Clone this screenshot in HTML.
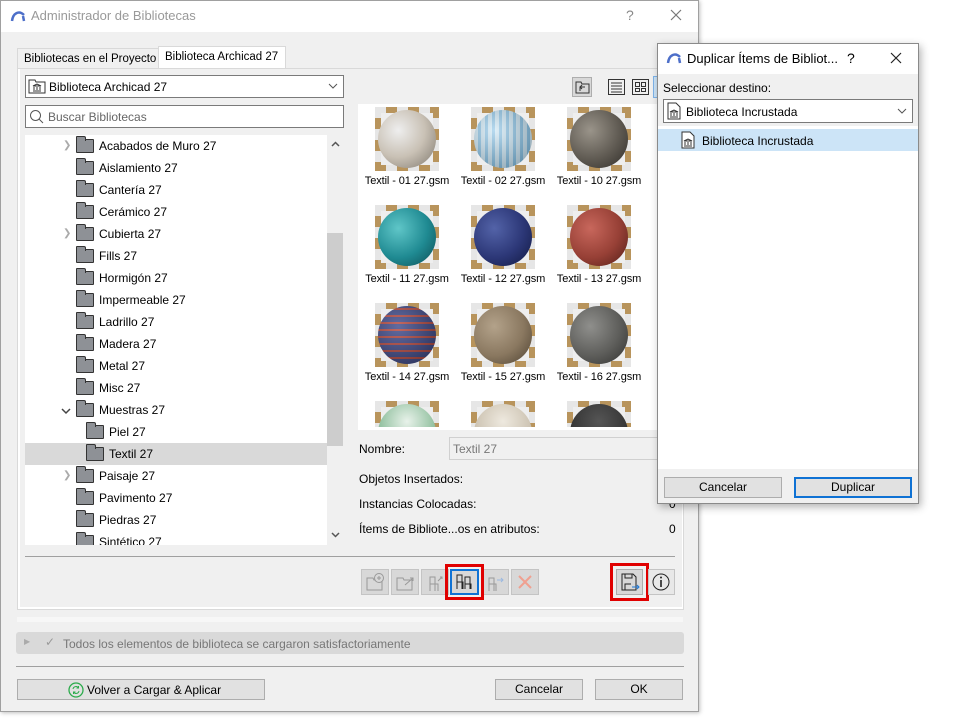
<!DOCTYPE html>
<html><head><meta charset="utf-8"><style>
*{box-sizing:border-box;margin:0;padding:0}
body{width:955px;height:723px;background:#fff;font-family:"Liberation Sans",sans-serif;font-size:12px;color:#000;position:relative;overflow:hidden}
.a{position:absolute;white-space:nowrap}
.btn{position:absolute;background:#e1e1e1;border:1px solid #adadad;text-align:center;line-height:19px;font-size:12px;white-space:nowrap}
.fold{position:absolute;width:18px;height:14px;top:4px;background:#8e9196;border:1px solid #333;border-radius:1px}
.fold:before{content:"";position:absolute;left:-1px;top:-4px;width:8px;height:4px;background:#8e9196;border:1px solid #333;border-bottom:none;border-radius:1px 2px 0 0}
.chev{position:absolute;color:#aaa;font-size:10px}
.th{position:absolute;width:64px;height:64px;background:
 conic-gradient(#b8945c 25%,#e6e6e6 0 50%,#b8945c 0 75%,#e6e6e6 0) 0 0/22px 22px;overflow:hidden}
.th:before{content:"";position:absolute;left:6px;top:6px;right:6px;bottom:6px;background:#eee}
.th i{position:absolute;left:3px;top:3px;width:58px;height:58px;border-radius:50%}
.lb{position:absolute;width:96px;text-align:center;font-size:11px;letter-spacing:-0.1px;white-space:nowrap}
.tb{position:absolute;top:569px;width:28px;height:26px;background:#d8d8d8;border:1px solid #c4c4c4}
</style></head><body>
<div class="a" style="left:0;top:0;width:699px;height:712px;background:#f0f0f0;border:1px solid #a0a0a0;box-shadow:1px 1px 4px rgba(0,0,0,.25)"></div>
<div class="a" style="left:1px;top:1px;width:697px;height:31px;background:#fff"></div>
<svg class="a" style="left:10px;top:9px" width="16" height="14"><path d="M2 12 C3 4 9 1 14 6" stroke="#4d6fc9" stroke-width="2.5" fill="none"/><path d="M13 7 L14 12" stroke="#4d6fc9" stroke-width="2.5"/></svg>
<div class="a" style="left:31px;top:8px;font-size:13px;color:#999">Administrador de Bibliotecas</div>
<div class="a" style="left:626px;top:7px;font-size:14px;color:#888">?</div>
<svg class="a" style="left:670px;top:9px" width="12" height="12"><path d="M1 1l10 10M11 1L1 11" stroke="#777" stroke-width="1.2"/></svg>
<div class="a" style="left:17px;top:48px;width:142px;height:21px;border:1px solid #d9d9d9;border-bottom:none;background:#f0f0f0;padding:4px 0 0 6px;font-size:11.5px">Bibliotecas en el Proyecto</div>
<div class="a" style="left:158px;top:46px;width:128px;height:23px;border:1px solid #d9d9d9;border-bottom:none;background:#fff;padding:4px 0 0 6px;font-size:11.5px">Biblioteca Archicad 27</div>
<div class="a" style="left:17px;top:68px;width:667px;height:542px;border:1px solid #d9d9d9;background:#fff"></div>
<div class="a" style="left:20px;top:69px;width:662px;height:538px;background:#f0f0f0"></div>
<div class="a" style="left:25px;top:75px;width:319px;height:23px;border:1px solid #7a7a7a;background:#fff"></div>
<svg class="a" style="left:28px;top:79px" width="18" height="15"><path d="M1 1h6l1 2h9v11H1z" fill="#fff" stroke="#333"/><path d="M5 7l4-2 4 2zM5 12h8M6 8v3M9 8v3M12 8v3" stroke="#333" fill="none"/></svg>
<div class="a" style="left:49px;top:80px">Biblioteca Archicad 27</div>
<svg class="a" style="left:328px;top:83px" width="10" height="6"><path d="M1 1l4 4 4-4" stroke="#555" fill="none"/></svg>
<div class="a" style="left:25px;top:105px;width:319px;height:23px;border:1px solid #7a7a7a;background:#fff"></div>
<svg class="a" style="left:29px;top:109px" width="16" height="16"><circle cx="6.5" cy="6.5" r="5" stroke="#555" fill="none"/><path d="M10 10l4 4" stroke="#555"/></svg>
<div class="a" style="left:48px;top:110px;color:#666">Buscar Bibliotecas</div>
<div class="a" style="left:25px;top:135px;width:318px;height:410px;background:#fff"></div>
<div class="a" style="left:25px;top:443px;width:302px;height:22px;background:#d9d9d9"></div>
<div class="a" style="left:327px;top:135px;width:16px;height:410px;background:#f0f0f0"></div>
<div class="a" style="left:327px;top:233px;width:16px;height:213px;background:#cdcdcd"></div>
<svg class="a" style="left:331px;top:141px" width="9" height="6"><path d="M1 5l3.5-3.5L8 5" stroke="#555" stroke-width="1.5" fill="none"/></svg>
<svg class="a" style="left:331px;top:532px" width="9" height="6"><path d="M1 1l3.5 3.5L8 1" stroke="#555" stroke-width="1.5" fill="none"/></svg>
<div class="a" style="left:25px;top:135px;width:302px;height:410px;overflow:hidden">
<div style="position:relative">
<span class="chev" style="left:38px;top:5px">❯</span><div class="fold" style="left:51px"></div><div class="a" style="left:74px;top:4px">Acabados de Muro 27</div>
<div class="fold" style="left:51px;top:26px"></div><div class="a" style="left:74px;top:26px">Aislamiento 27</div>
<div class="fold" style="left:51px;top:48px"></div><div class="a" style="left:74px;top:48px">Cantería 27</div>
<div class="fold" style="left:51px;top:70px"></div><div class="a" style="left:74px;top:70px">Cerámico 27</div>
<span class="chev" style="left:38px;top:93px">❯</span><div class="fold" style="left:51px;top:92px"></div><div class="a" style="left:74px;top:92px">Cubierta 27</div>
<div class="fold" style="left:51px;top:114px"></div><div class="a" style="left:74px;top:114px">Fills 27</div>
<div class="fold" style="left:51px;top:136px"></div><div class="a" style="left:74px;top:136px">Hormigón 27</div>
<div class="fold" style="left:51px;top:158px"></div><div class="a" style="left:74px;top:158px">Impermeable 27</div>
<div class="fold" style="left:51px;top:180px"></div><div class="a" style="left:74px;top:180px">Ladrillo 27</div>
<div class="fold" style="left:51px;top:202px"></div><div class="a" style="left:74px;top:202px">Madera 27</div>
<div class="fold" style="left:51px;top:224px"></div><div class="a" style="left:74px;top:224px">Metal 27</div>
<div class="fold" style="left:51px;top:246px"></div><div class="a" style="left:74px;top:246px">Misc 27</div>
<svg class="a" style="left:36px;top:273px" width="10" height="7"><path d="M1 1l4 4 4-4" stroke="#444" stroke-width="1.5" fill="none"/></svg><div class="fold" style="left:51px;top:268px"></div><div class="a" style="left:74px;top:268px">Muestras 27</div>
<div class="fold" style="left:61px;top:290px"></div><div class="a" style="left:84px;top:290px">Piel 27</div>
<div class="fold" style="left:61px;top:312px"></div><div class="a" style="left:84px;top:312px">Textil 27</div>
<span class="chev" style="left:38px;top:335px">❯</span><div class="fold" style="left:51px;top:334px"></div><div class="a" style="left:74px;top:334px">Paisaje 27</div>
<div class="fold" style="left:51px;top:356px"></div><div class="a" style="left:74px;top:356px">Pavimento 27</div>
<div class="fold" style="left:51px;top:378px"></div><div class="a" style="left:74px;top:378px">Piedras 27</div>
<div class="fold" style="left:51px;top:400px"></div><div class="a" style="left:74px;top:400px">Sintético 27</div>
</div></div>
<div class="a" style="left:572px;top:77px;width:20px;height:20px;background:#d8d8d8;border:1px solid #adadad"></div>
<svg class="a" style="left:575px;top:80px" width="15" height="14"><path d="M1 2h5l1 2h7v9H1z" fill="none" stroke="#333"/><path d="M5 11V7h5M5 7l2-2M5 7l2 2" stroke="#333" fill="none"/></svg>
<svg class="a" style="left:608px;top:79px" width="17" height="16"><rect x=".5" y=".5" width="16" height="15" fill="none" stroke="#333"/><path d="M3 4h11M3 7h11M3 10h11M3 13h11" stroke="#333"/></svg>
<svg class="a" style="left:632px;top:79px" width="17" height="16"><rect x=".5" y=".5" width="16" height="15" fill="none" stroke="#333"/><rect x="3.5" y="3.5" width="4" height="4" fill="none" stroke="#333"/><rect x="9.5" y="3.5" width="4" height="4" fill="none" stroke="#333"/><rect x="3.5" y="9.5" width="4" height="3" fill="none" stroke="#333"/><rect x="9.5" y="9.5" width="4" height="3" fill="none" stroke="#333"/></svg>
<div class="a" style="left:653px;top:76px;width:6px;height:22px;background:#cde4f7;border:1px solid #7eb4ea"></div>
<div class="a" style="left:358px;top:104px;width:300px;height:326px;background:#fff"></div>
<div class="th" style="left:375px;top:107px"><i style="background:radial-gradient(circle at 35% 35%,#eee,#c9c1b5 50%,#7d766c)"></i></div>
<div class="th" style="left:471px;top:107px"><i style="background:radial-gradient(circle at 35% 35%,rgba(255,255,255,.5),rgba(0,0,0,.3)),repeating-linear-gradient(90deg,#bfe0f2 0 4px,#6fb5e0 4px 7px)"></i></div>
<div class="th" style="left:567px;top:107px"><i style="background:radial-gradient(circle at 35% 35%,#9a948a,#5f5a52 55%,#2e2b27)"></i></div>
<div class="lb" style="left:359px;top:175px">Textil - 01 27.gsm</div>
<div class="lb" style="left:455px;top:175px">Textil - 02 27.gsm</div>
<div class="lb" style="left:551px;top:175px">Textil - 10 27.gsm</div>
<div class="th" style="left:375px;top:205px"><i style="background:radial-gradient(circle at 35% 35%,#5fc6c8,#1f8a92 55%,#0c4b52)"></i></div>
<div class="th" style="left:471px;top:205px"><i style="background:radial-gradient(circle at 35% 35%,#5363a8,#2c3777 55%,#111840)"></i></div>
<div class="th" style="left:567px;top:205px"><i style="background:radial-gradient(circle at 35% 35%,#c8675c,#974036 55%,#521d17)"></i></div>
<div class="lb" style="left:359px;top:273px">Textil - 11 27.gsm</div>
<div class="lb" style="left:455px;top:273px">Textil - 12 27.gsm</div>
<div class="lb" style="left:551px;top:273px">Textil - 13 27.gsm</div>
<div class="th" style="left:375px;top:303px"><i style="background:radial-gradient(circle at 35% 35%,rgba(255,255,255,.2),rgba(0,0,0,.4)),repeating-linear-gradient(0deg,#3b4688 0 5px,#b6443b 5px 7px),#3b4688"></i></div>
<div class="th" style="left:471px;top:303px"><i style="background:radial-gradient(circle at 35% 35%,#b3a28a,#8a7860 55%,#4c4030)"></i></div>
<div class="th" style="left:567px;top:303px"><i style="background:radial-gradient(circle at 35% 35%,#8f8f8c,#5e5e5b 55%,#30302e)"></i></div>
<div class="lb" style="left:359px;top:371px">Textil - 14 27.gsm</div>
<div class="lb" style="left:455px;top:371px">Textil - 15 27.gsm</div>
<div class="lb" style="left:551px;top:371px">Textil - 16 27.gsm</div>
<div class="th" style="left:375px;top:401px;height:26px"><i style="background:radial-gradient(circle at 50% 30%,#e8f2ea,#4f9a66)"></i></div>
<div class="th" style="left:471px;top:401px;height:26px"><i style="background:radial-gradient(circle at 50% 30%,#eee9df,#b3a690)"></i></div>
<div class="th" style="left:567px;top:401px;height:26px"><i style="background:radial-gradient(circle at 50% 30%,#555,#1e1e1e)"></i></div>
<div class="a" style="left:359px;top:442px">Nombre:</div>
<div class="a" style="left:449px;top:437px;width:215px;height:23px;border:1px solid #d0d0d0;background:#f0f0f0;color:#777;padding:4px 3px">Textil 27</div>
<div class="a" style="left:359px;top:472px">Objetos Insertados:</div>
<div class="a" style="left:359px;top:497px">Instancias Colocadas:</div>
<div class="a" style="left:359px;top:522px">Ítems de Bibliote...os en atributos:</div>
<div class="a" style="left:669px;top:522px">0</div>
<div class="a" style="left:669px;top:497px">0</div>
<div class="a" style="left:25px;top:556px;width:650px;height:1px;background:#a0a0a0"></div>
<div class="tb" style="left:361px"></div><div class="tb" style="left:391px"></div><div class="tb" style="left:421px"></div>
<div class="tb" style="left:481px"></div><div class="tb" style="left:511px"></div>
<svg class="a" style="left:366px;top:572px" width="20" height="20"><path d="M1 6h6l1 2h8v10H1z" fill="none" stroke="#999"/><circle cx="13" cy="6" r="4.5" fill="#d8d8d8" stroke="#999"/><path d="M13 4v4M11 6h4" stroke="#999"/></svg>
<svg class="a" style="left:396px;top:573px" width="20" height="20"><path d="M1 5h6l1 2h8v10H1z" fill="none" stroke="#999"/><path d="M9 12l8-7M14 5h3v3" stroke="#999" fill="none"/></svg>
<svg class="a" style="left:426px;top:573px" width="20" height="20"><path d="M4 18V4h5v14M4 11h8v7" stroke="#999" fill="none"/><path d="M12 8l4-4M14 4h2v2" stroke="#999" fill="none"/></svg>
<div class="a" style="left:445px;top:564px;width:39px;height:36px;border:3px solid #e00000"></div>
<div class="a" style="left:450px;top:569px;width:29px;height:26px;border:2px solid #0f72d4;background:#d8d8d8"></div>
<svg class="a" style="left:455px;top:572px" width="20" height="20"><path d="M2 17V3h5v14M2 10h6v7M10 17V5h5v12M10 12h6v5" stroke="#222" fill="none"/></svg>
<svg class="a" style="left:486px;top:573px" width="20" height="20"><path d="M3 18V5h5v13M3 11h7v7" stroke="#999" fill="none"/><path d="M11 7h6M15 5l2 2-2 2" stroke="#9ab8e0" fill="none"/></svg>
<svg class="a" style="left:516px;top:573px" width="18" height="18"><path d="M3 3l12 12M15 3L3 15" stroke="#f0a090" stroke-width="2"/></svg>
<div class="a" style="left:610px;top:563px;width:39px;height:38px;border:3px solid #e00000"></div>
<div class="a" style="left:616px;top:569px;width:27px;height:26px;background:#d8d8d8;border:1px solid #adadad"></div>
<svg class="a" style="left:621px;top:573px" width="19" height="18"><path d="M1 1h11l3 3v13H1z" fill="none" stroke="#222"/><path d="M4 1v4h7V1M4 17v-6h6" stroke="#222" fill="none"/><path d="M11 14h7M16 12l2 2-2 2" stroke="#1e78d6" fill="none"/></svg>
<div class="a" style="left:648px;top:569px;width:27px;height:26px;background:#e8e8e8;border:1px solid #c4c4c4"></div>
<svg class="a" style="left:651px;top:572px" width="20" height="20"><circle cx="10" cy="10" r="8" fill="none" stroke="#222"/><path d="M10 8v7" stroke="#222" stroke-width="1.6"/><circle cx="10" cy="5.5" r="1" fill="#222"/></svg>
<div class="a" style="left:17px;top:617px;width:666px;height:5px;background:#f7f7f7"></div>
<div class="a" style="left:16px;top:632px;width:668px;height:22px;background:#d9d9d9;border-radius:3px"></div>
<div class="a" style="left:24px;top:637px;color:#aaa;font-size:8px">▶</div>
<div class="a" style="left:45px;top:635px;color:#999">✓</div>
<div class="a" style="left:63px;top:637px;color:#777">Todos los elementos de biblioteca se cargaron satisfactoriamente</div>
<div class="a" style="left:16px;top:666px;width:668px;height:1px;background:#a0a0a0"></div>
<div class="btn" style="left:17px;top:679px;width:248px;height:21px"></div>
<svg class="a" style="left:68px;top:682px" width="16" height="16"><circle cx="8" cy="8" r="7" fill="none" stroke="#2bab4b" stroke-width="1.3"/><path d="M5 7a3 3 0 0 1 5.5-1M11 9a3 3 0 0 1-5.5 1" stroke="#2bab4b" fill="none"/><path d="M10.5 4v2h-2M5.5 12v-2h2" stroke="#2bab4b" fill="none"/></svg>
<div class="a" style="left:87px;top:683px">Volver a Cargar &amp; Aplicar</div>
<div class="btn" style="left:495px;top:679px;width:88px;height:21px">Cancelar</div>
<div class="btn" style="left:595px;top:679px;width:88px;height:21px">OK</div>
<div class="a" style="left:657px;top:43px;width:262px;height:461px;background:#f0f0f0;border:1px solid #8a8a8a;box-shadow:2px 3px 8px rgba(0,0,0,.3)"></div>
<div class="a" style="left:658px;top:44px;width:260px;height:30px;background:#fff"></div>
<svg class="a" style="left:666px;top:51px" width="16" height="14"><path d="M2 12 C3 4 9 1 14 6" stroke="#4d6fc9" stroke-width="2.5" fill="none"/><path d="M13 7 L14 12" stroke="#4d6fc9" stroke-width="2.5"/></svg>
<div class="a" style="left:687px;top:51px;font-size:13px">Duplicar Ítems de Bibliot...</div>
<div class="a" style="left:847px;top:50px;font-size:14px">?</div>
<svg class="a" style="left:890px;top:52px" width="12" height="12"><path d="M1 1l10 10M11 1L1 11" stroke="#222" stroke-width="1.2"/></svg>
<div class="a" style="left:663px;top:81px">Seleccionar destino:</div>
<div class="a" style="left:663px;top:99px;width:250px;height:24px;border:1px solid #7a7a7a;background:#fff"></div>
<svg class="a" style="left:667px;top:102px" width="14" height="18"><path d="M1 1h8l4 4v12H1z" fill="#fff" stroke="#333"/><path d="M3 10l4-2 4 2zM3 15h8M4 11v3M7 11v3M10 11v3" stroke="#333" fill="none"/></svg>
<div class="a" style="left:686px;top:105px">Biblioteca Incrustada</div>
<svg class="a" style="left:897px;top:108px" width="10" height="6"><path d="M1 1l4 4 4-4" stroke="#555" fill="none"/></svg>
<div class="a" style="left:658px;top:126px;width:260px;height:343px;background:#fff"></div>
<div class="a" style="left:658px;top:129px;width:260px;height:22px;background:#cce4f7"></div>
<svg class="a" style="left:681px;top:131px" width="14" height="18"><path d="M1 1h8l4 4v12H1z" fill="#fff" stroke="#333"/><path d="M3 10l4-2 4 2zM3 15h8M4 11v3M7 11v3M10 11v3" stroke="#333" fill="none"/></svg>
<div class="a" style="left:702px;top:134px">Biblioteca Incrustada</div>
<div class="btn" style="left:664px;top:477px;width:118px;height:21px">Cancelar</div>
<div class="btn" style="left:794px;top:477px;width:118px;height:21px;border:2px solid #0f72d4;line-height:17px">Duplicar</div>
</body></html>
